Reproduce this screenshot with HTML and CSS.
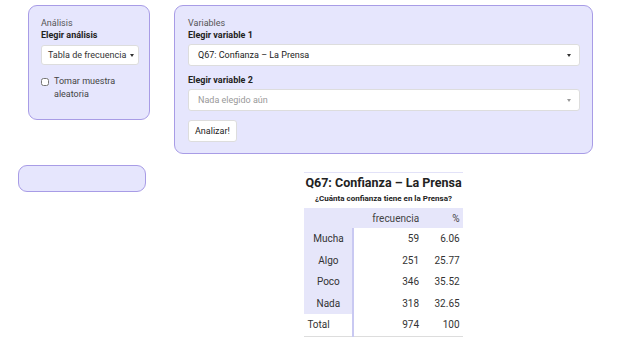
FILE: index.html
```html
<!DOCTYPE html>
<html lang="es">
<head>
    <meta charset="UTF-8">
    <title>Análisis</title>
    <link rel="stylesheet" href="styles.css">
</head>
<body>
    <div class="top-row">
        <div class="panel side-panel">
            <div class="label">Análisis</div>
            <div class="label-bold">Elegir análisis</div>
            <button class="drop-btn" type="button">Tabla de frecuencia <span class="caret"></span></button>
            <label class="check">
                <input type="checkbox">
                <span>Tomar muestra aleatoria</span>
            </label>
        </div>

        <div class="panel main-panel">
            <div class="label">Variables</div>
            <div class="label-bold">Elegir variable 1</div>
            <div class="select">
                <span>Q67: Confianza – La Prensa</span>
                <span class="caret"></span>
            </div>
            <div class="label-bold second">Elegir variable 2</div>
            <div class="select empty">
                <span>Nada elegido aún</span>
                <span class="caret light"></span>
            </div>
            <button class="run-btn" type="button">Analizar!</button>
        </div>
    </div>

    <div class="bottom-row">
        <div class="side-col">
            <div class="panel small-panel"></div>
        </div>
        <div class="main-col">
            <table class="freq-table">
                <thead>
                    <tr class="title-row">
                        <th colspan="3">Q67: Confianza – La Prensa</th>
                    </tr>
                    <tr class="subtitle-row">
                        <th colspan="3">¿Cuánta confianza tiene en la Prensa?</th>
                    </tr>
                    <tr class="head-row">
                        <th></th>
                        <th class="num">frecuencia</th>
                        <th class="num">%</th>
                    </tr>
                </thead>
                <tbody>
                    <tr><td class="stub">Mucha</td><td class="num">59</td><td class="num">6.06</td></tr>
                    <tr><td class="stub">Algo</td><td class="num">251</td><td class="num">25.77</td></tr>
                    <tr><td class="stub">Poco</td><td class="num">346</td><td class="num">35.52</td></tr>
                    <tr><td class="stub">Nada</td><td class="num">318</td><td class="num">32.65</td></tr>
                    <tr class="total-row"><td class="stub">Total</td><td class="num">974</td><td class="num">100</td></tr>
                </tbody>
            </table>
        </div>
    </div>
</body>
</html>
```

FILE: styles.css
```css
body {
    margin: 0;
    font-family: Roboto, "Liberation Sans", sans-serif;
    font-size: 9px;
    color: #333;
    background-color: #fff;
}

.top-row {
    display: flex;
    align-items: flex-start;
    padding: 5px 0 0 28px;
    gap: 24px;
}

.panel {
    background-color: #e6e6fd;
    border: 1px solid #a89ce6;
    border-radius: 9px;
    box-sizing: border-box;
}

.side-panel {
    width: 122px;
    height: 115px;
    padding: 11px 12px;
}

.main-panel {
    width: 419px;
    height: 149px;
    padding: 11px 13px;
}

.label {
    color: #555;
    line-height: 12px;
}

.label-bold {
    font-weight: bold;
    color: #222;
    line-height: 12px;
}

.label-bold.second {
    margin-top: 8px;
}

.drop-btn {
    display: block;
    margin-top: 4px;
    width: 98px;
    height: 20px;
    padding: 0 0 0 6px;
    text-align: left;
    font: inherit;
    color: #333;
    background-color: #fff;
    border: 1px solid #ddd;
    border-radius: 3px;
}

.caret {
    display: inline-block;
    width: 0;
    height: 0;
    border-left: 2.5px solid transparent;
    border-right: 2.5px solid transparent;
    border-top: 3px solid #333;
    vertical-align: middle;
    margin-left: 1px;
}

.caret.light {
    border-top-color: #999;
}

.check {
    display: flex;
    align-items: flex-start;
    gap: 5px;
    margin-top: 10px;
    line-height: 13px;
    color: #444;
    width: 80px;
}

.check input {
    width: 8px;
    height: 8px;
    margin: 3px 0 0 0;
}

.select {
    display: flex;
    justify-content: space-between;
    align-items: center;
    margin-top: 3px;
    height: 22px;
    padding: 0 8px 0 9px;
    background-color: #fff;
    border: 1px solid #ddd;
    border-radius: 3px;
    box-sizing: border-box;
    width: 392px;
    color: #222;
}

.select.empty {
    color: #999;
}

.run-btn {
    display: block;
    margin-top: 9px;
    height: 22px;
    padding: 0 6px;
    font: inherit;
    color: #222;
    background-color: #fff;
    border: 1px solid #ddd;
    border-radius: 3px;
}

.bottom-row {
    display: flex;
    align-items: flex-start;
    padding-left: 18px;
    margin-top: 11px;
}

.side-col {
    width: 128px;
}

.small-panel {
    height: 27px;
}

.main-col {
    width: 419px;
    margin-left: 28px;
    display: flex;
    justify-content: center;
    padding-top: 7px;
}

.freq-table {
    border-collapse: collapse;
    width: 158px;
    font-size: 10px;
    color: #333;
    border-top: 1px solid #e2e2f8;
    border-bottom: 1px solid #ddd;
}

.freq-table th,
.freq-table td {
    padding: 0 3px;
    font-weight: normal;
}

.title-row th {
    font-size: 12.5px;
    font-weight: bold;
    color: #222;
    text-align: left;
    white-space: nowrap;
    padding: 2px 1px 0;
    height: 15px;
}

.subtitle-row th {
    font-size: 8px;
    font-weight: bold;
    color: #222;
    text-align: center;
    white-space: nowrap;
    padding: 4px 0 5px;
}

.head-row th {
    background-color: #e6e6fa;
    height: 20px;
    color: #444;
}

.freq-table td {
    height: 21.5px;
}

.stub {
    width: 42px;
    text-align: center;
    background-color: #e6e6fa;
    border-right: 2px solid #c9c9f2;
}

.num {
    text-align: right;
}

.total-row .stub {
    background-color: #fff;
    text-align: left;
}
```
